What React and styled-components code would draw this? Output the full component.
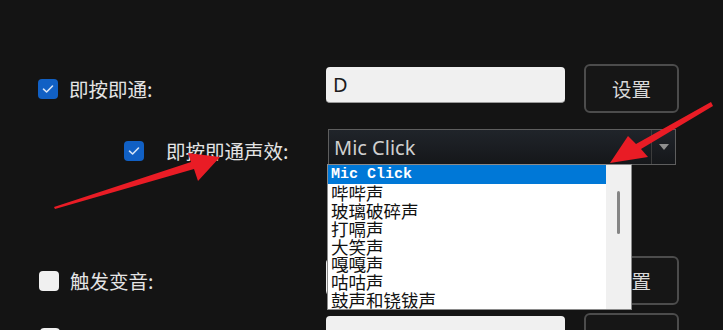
import React from 'react';
import styled, { createGlobalStyle } from 'styled-components';

const GlobalStyle = createGlobalStyle`
  html, body {
    margin: 0;
    padding: 0;
    background: #141414;
  }
  body {
    font-family: "Noto Sans CJK SC", "Noto Sans", sans-serif;
  }
`;

const sounds = [
  'Mic Click',
  '哔哔声',
  '玻璃破碎声',
  '打嗝声',
  '大笑声',
  '嘎嘎声',
  '咕咕声',
  '鼓声和铙钹声',
];

const CheckIcon = () => (
  <svg width="12" height="10" viewBox="0 0 12 10">
    <polyline
      points="1.5,5.2 4.6,8 10.5,2"
      fill="none"
      stroke="#d6e4f7"
      strokeWidth="1.6"
      strokeLinecap="round"
      strokeLinejoin="round"
    />
  </svg>
);

const Arrows = () => (
  <ArrowLayer width="723" height="330" viewBox="0 0 723 330">
    <polygon
      points="54,207 191,162 188,153 220,157 198,181 194,169 55,209"
      fill="#e91c25"
    />
    <polygon
      points="711,102 636,144 628,136 610,163 648,157 641,149 713,106"
      fill="#e91c25"
    />
  </ArrowLayer>
);

const App = () => {
  return (
    <Page>
      <GlobalStyle />
      <Row height={49}>
        <LeftCell>
          <Check checked indent={38} />
          <Label>即按即通:</Label>
        </LeftCell>
        <TextInput>D</TextInput>
        <SetButton>设置</SetButton>
      </Row>

      <Row height={36} gap={16}>
        <LeftCell shift={8}>
          <Check checked indent={124} />
          <Label space={22}>即按即通声效:</Label>
        </LeftCell>
        <Combo>
          <ComboText>Mic Click</ComboText>
          <ComboArrow>
            <svg width="10" height="6" viewBox="0 0 10 6">
              <polygon points="0,0 10,0 5,6" fill="#8f8f8f" />
            </svg>
          </ComboArrow>
          <DropList>
            <Items>
              {sounds.map((s, i) => (
                <Item key={s} selected={i === 0} mono={i === 0}>
                  {s}
                </Item>
              ))}
            </Items>
            <ScrollTrack>
              <ScrollThumb />
            </ScrollTrack>
          </DropList>
        </Combo>
      </Row>

      <Row height={49} gap={91}>
        <LeftCell>
          <Check indent={39} />
          <Label>触发变音:</Label>
        </LeftCell>
        <TextInput />
        <SetButton>设置</SetButton>
      </Row>

      <Row height={49} gap={8}>
        <LeftCell>
          <Check indent={40} />
        </LeftCell>
        <TextInput />
        <SetButton />
      </Row>

      <Arrows />
    </Page>
  );
};

const Page = styled.div`
  position: relative;
  width: 723px;
  height: 330px;
  overflow: hidden;
  padding-top: 64px;
  box-sizing: border-box;
  background: #141414;
`;

const Row = styled.div`
  display: flex;
  align-items: center;
  height: ${(p) => p.height}px;
  margin-top: ${(p) => p.gap || 0}px;
`;

const LeftCell = styled.div`
  display: flex;
  align-items: center;
  width: 326px;
  flex-shrink: 0;
  margin-top: ${(p) => p.shift || 0}px;
`;

const Check = styled.span.attrs((p) => ({
  children: p.checked ? <CheckIcon /> : null,
}))`
  display: flex;
  align-items: center;
  justify-content: center;
  width: 20px;
  height: 20px;
  box-sizing: border-box;
  margin-left: ${(p) => p.indent}px;
  border-radius: 4px;
  background: ${(p) => (p.checked ? '#1160c4' : '#f0f0f0')};
  flex-shrink: 0;
`;

const Label = styled.span`
  margin-left: ${(p) => p.space || 11}px;
  color: #e4e4e4;
  font-size: 19.5px;
  line-height: 1;
  white-space: nowrap;
`;

const TextInput = styled.div`
  width: 239px;
  height: 36px;
  box-sizing: border-box;
  margin-bottom: 7px;
  padding-left: 7px;
  display: flex;
  align-items: center;
  background: #f0f0f0;
  border-radius: 4px;
  border-bottom: 1px solid #9a9a9a;
  color: #1c1c1c;
  font-family: "Noto Sans", "Open Sans", sans-serif;
  font-size: 20px;
`;

const SetButton = styled.div`
  width: 95px;
  height: 49px;
  box-sizing: border-box;
  margin-left: 19px;
  display: flex;
  align-items: center;
  justify-content: center;
  border: 2px solid #4c4c4c;
  border-radius: 6px;
  background: #161616;
  color: #d8d8d8;
  font-size: 19.5px;
`;

const Combo = styled.div`
  position: relative;
  width: 348px;
  height: 36px;
  margin-left: 2px;
  box-sizing: border-box;
  display: flex;
  align-items: center;
  border: 1px solid #5e5e5e;
  background: linear-gradient(#20242a, #15171a);
`;

const ComboText = styled.span`
  flex: 1;
  padding-left: 5px;
  color: #cfcfcf;
  font-family: "Noto Sans", "Open Sans", sans-serif;
  font-size: 20px;
`;

const ComboArrow = styled.span`
  width: 23px;
  height: 100%;
  display: flex;
  align-items: center;
  justify-content: center;
  border-left: 1px solid #3c3c3c;
`;

const DropList = styled.div`
  position: absolute;
  left: -2px;
  top: 34px;
  width: 305px;
  height: 146px;
  box-sizing: border-box;
  display: flex;
  border: 1px solid #8a8a8a;
  background: #ffffff;
  z-index: 2;
`;

const Items = styled.div`
  flex: 1;
  display: flex;
  flex-direction: column;
`;

const Item = styled.div`
  height: 17.8px;
  display: flex;
  align-items: center;
  padding-left: 3px;
  background: ${(p) => (p.selected ? '#0078d7' : 'transparent')};
  color: ${(p) => (p.selected ? '#ffffff' : '#111111')};
  font-family: ${(p) =>
    p.mono ? '"Liberation Mono", monospace' : '"Noto Sans CJK SC", sans-serif'};
  font-size: ${(p) => (p.mono ? '15px' : '17.5px')};
  font-weight: ${(p) => (p.mono ? 700 : 400)};
  line-height: 1;
  white-space: nowrap;
  &:first-child {
    height: 19px;
  }
`;

const ScrollTrack = styled.div`
  width: 25px;
  background: #f0f0f0;
  display: flex;
  justify-content: center;
`;

const ScrollThumb = styled.div`
  width: 3px;
  height: 43px;
  margin-top: 26px;
  border-radius: 2px;
  background: #858585;
`;

const ArrowLayer = styled.svg`
  position: absolute;
  left: 0;
  top: 0;
  pointer-events: none;
  z-index: 3;
`;

export default App;
